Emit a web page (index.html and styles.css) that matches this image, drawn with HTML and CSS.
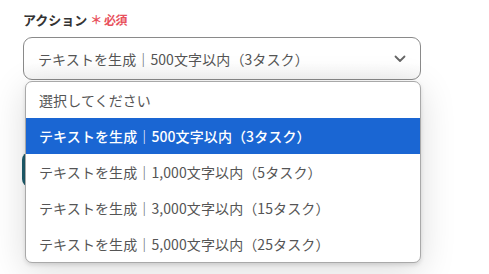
FILE: index.html
```html
<!DOCTYPE html>
<html lang="ja">
<head>
<meta charset="utf-8">
<link rel="stylesheet" href="styles.css">
</head>
<body>
<div class="form">
  <div class="field">
    <div class="label"><span class="label-text">アクション</span><span class="req">＊ 必須</span></div>
    <div class="select-wrap">
      <div class="select">
        <span class="value">テキストを生成｜500文字以内（3タスク）</span>
        <svg class="chev" width="12" height="8" viewBox="0 0 12 8"><path d="M1.5 1.5 L6 6 L10.5 1.5" fill="none" stroke="#666" stroke-width="1.8" stroke-linecap="round" stroke-linejoin="round"/></svg>
      </div>
      <ul class="menu">
        <li class="opt">選択してください</li>
        <li class="opt active">テキストを生成｜500文字以内（3タスク）</li>
        <li class="opt">テキストを生成｜1,000文字以内（5タスク）</li>
        <li class="opt">テキストを生成｜3,000文字以内（15タスク）</li>
        <li class="opt">テキストを生成｜5,000文字以内（25タスク）</li>
      </ul>
    </div>
    <div class="button-row"><div class="btn"></div></div>
  </div>
</div>
</body>
</html>
```
FILE: styles.css
```css
* { box-sizing: border-box; }
html, body { margin: 0; padding: 0; background: #fff; }
body {
  font-family: "Noto Sans CJK JP", "Noto Sans", sans-serif;
  color: #333;
  width: 489px;
  height: 274px;
  overflow: hidden;
}
.form { padding: 9px 68px 0 23px; }
.label { display: flex; align-items: center; gap: 3px; height: 20px; }
.label-text { font-size: 13px; font-weight: 700; color: #333; }
.req { font-size: 12px; font-weight: 700; color: #e8515c; letter-spacing: -0.5px; }
.select-wrap { position: relative; margin-top: 8px; }
.select {
  height: 43px;
  border: 1px solid #8a8a8a;
  border-radius: 9px;
  display: flex;
  align-items: center;
  justify-content: space-between;
  padding: 0 14px 0 14px;
  background: linear-gradient(#fff 60%, #f6f6f6);
}
.value { font-size: 14px; color: #555; letter-spacing: 0.1px; }
.menu {
  position: absolute;
  top: 44px;
  left: 2px;
  right: 0;
  margin: 0;
  padding: 0;
  list-style: none;
  background: #fff;
  border: 1px solid #a9a9a9;
  border-radius: 7px;
  box-shadow: 0 8px 36px rgba(0,0,0,0.14), 0 2px 4px rgba(0,0,0,0.12);
  overflow: hidden;
  z-index: 2;
}
.opt {
  height: 36px;
  display: flex;
  align-items: center;
  padding-left: 13px;
  font-size: 14px;
  color: #555;
  letter-spacing: 0.1px;
}
.opt.active { background: #1a66d3; color: #fff; font-weight: 500; }
.button-row { margin-top: 72px; }
.btn {
  width: 120px;
  height: 35px;
  margin-left: -1px;
  background: #1e5e6e;
  border-radius: 8px;
}
```
